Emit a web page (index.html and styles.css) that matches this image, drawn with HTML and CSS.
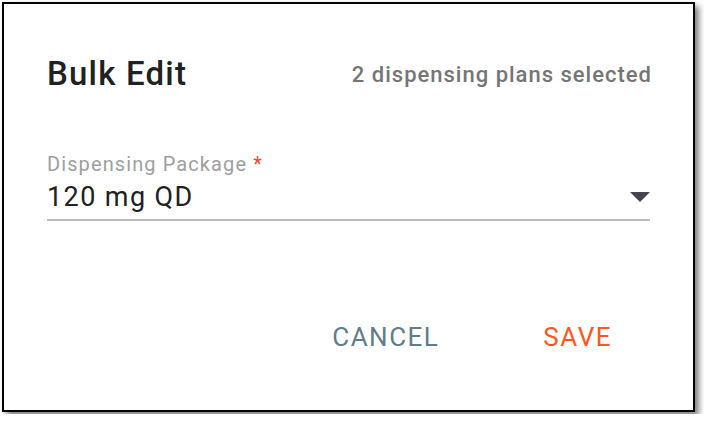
FILE: index.html
```html
<!DOCTYPE html>
<html lang="en">
<head>
    <meta charset="UTF-8">
    <meta name="viewport" content="width=device-width, initial-scale=1.0">
    <title>Bulk Edit</title>
    <link rel="stylesheet" href="styles.css">
</head>
<body>

    <div class="dialog">
        <div class="dialog-header">
            <h1 class="dialog-title">Bulk Edit</h1>
            <span class="dialog-subtitle">2 dispensing plans selected</span>
        </div>

        <div class="field">
            <label class="field-label" for="package">Dispensing Package <span class="required">*</span></label>
            <div class="select" id="package">
                <span class="select-value">120 mg QD</span>
                <svg class="select-arrow" width="20" height="10" viewBox="0 0 20 10">
                    <path d="M0 0 L20 0 L10 10 Z" fill="#45464f"/>
                </svg>
            </div>
        </div>

        <div class="dialog-actions">
            <button class="btn btn-cancel">CANCEL</button>
            <button class="btn btn-save">SAVE</button>
        </div>
    </div>

</body>
</html>
```

FILE: styles.css
```css
body {
    font-family: 'Roboto', 'Liberation Sans', sans-serif;
    background: #fff;
    margin: 0;
    padding: 2px;
}

.dialog {
    width: 693px;
    height: 410px;
    box-sizing: border-box;
    border: 2px solid #000;
    background: #fff;
    box-shadow: 4px 4px 6px rgba(0, 0, 0, 0.5);
    padding: 50px 43px 0 43px;
}

.dialog-header {
    display: flex;
    justify-content: space-between;
    align-items: center;
}

.dialog-title {
    margin: 0;
    font-size: 33px;
    line-height: 40px;
    font-weight: 500;
    letter-spacing: 1.2px;
    color: #212121;
}

.dialog-subtitle {
    font-size: 22px;
    font-weight: 500;
    letter-spacing: 1px;
    margin-right: -2px;
    color: #757575;
}

.field {
    margin-top: 58px;
}

.field-label {
    display: block;
    font-size: 20px;
    line-height: 24px;
    color: #9e9e9e;
    letter-spacing: 1.1px;
}

.required {
    color: #f44336;
}

.select {
    display: flex;
    align-items: center;
    justify-content: space-between;
    margin-top: 5px;
    padding-bottom: 6px;
    border-bottom: 2px solid #bdbdbd;
}

.select-value {
    font-size: 27px;
    line-height: 32px;
    letter-spacing: 1.4px;
    color: #212121;
}

.select-arrow {
    display: block;
}

.dialog-actions {
    display: flex;
    justify-content: flex-end;
    margin-top: 101px;
    padding-right: 38px;
    gap: 104px;
}

.btn {
    background: none;
    border: none;
    padding: 0;
    font-family: inherit;
    font-size: 26px;
    line-height: 30px;
    letter-spacing: 1.5px;
    cursor: pointer;
}

.btn-cancel {
    color: #607d8b;
}

.btn-save {
    color: #ff5722;
}
```
